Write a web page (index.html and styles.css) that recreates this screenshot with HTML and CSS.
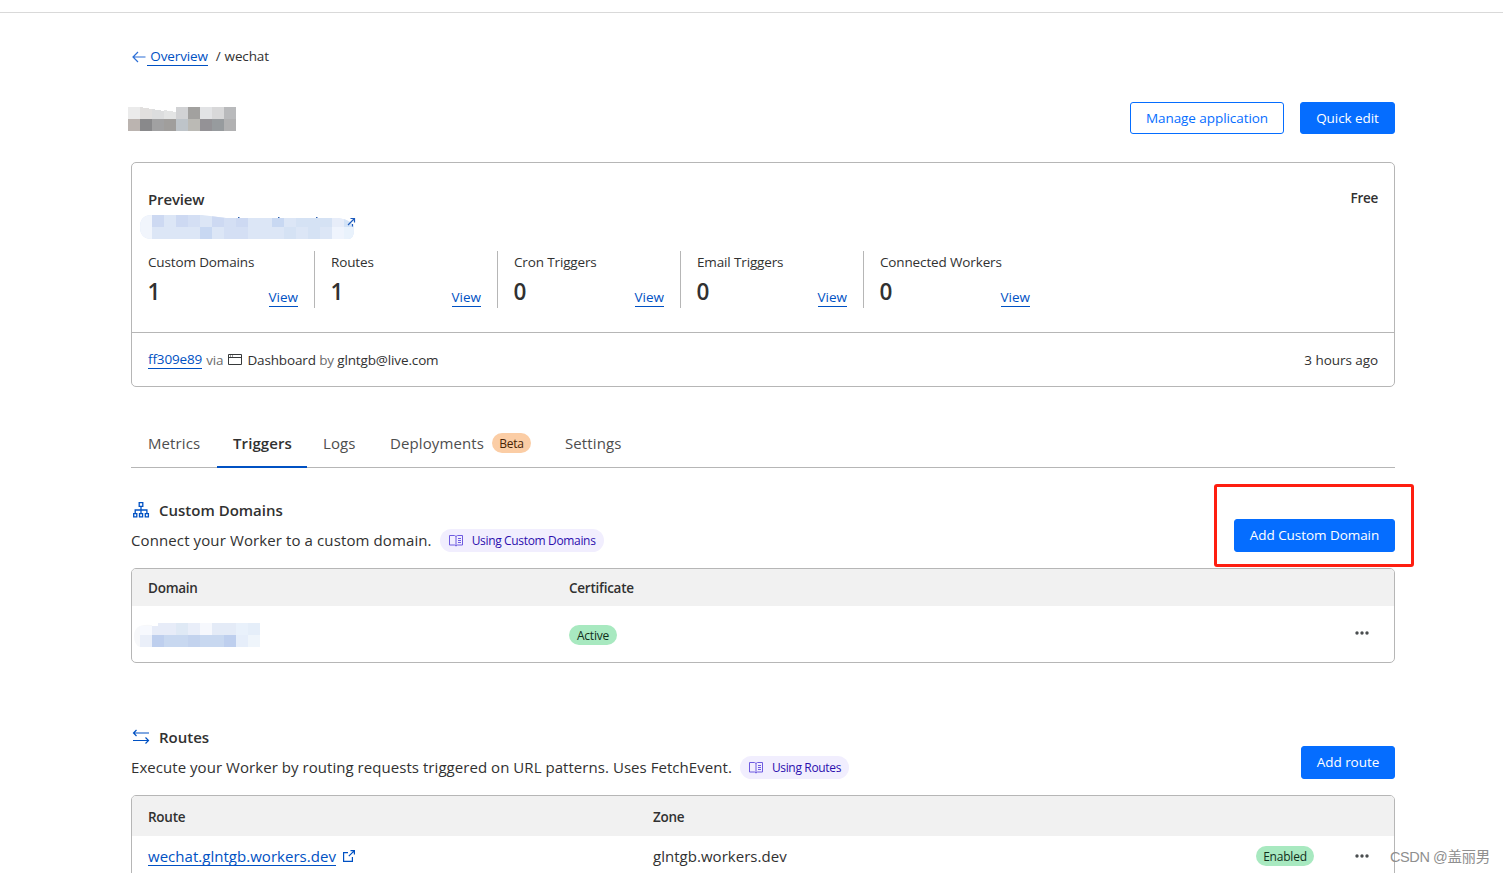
FILE: index.html
```html
<!DOCTYPE html>
<html lang="en">

<head>
  <meta charset="UTF-8" />
  <meta name="viewport" content="width=device-width, initial-scale=1.0" />
  <title>wechat - Workers</title>
  <link rel="stylesheet" href="styles.css">
</head>

<body>
  <div class="topbar"></div>
  <main class="page">
    <nav class="breadcrumb">
      <svg class="back" width="14" height="12" viewBox="0 0 14 12" fill="none" stroke="currentColor" stroke-width="1.2"><path d="M6 1L1 6l5 5M1 6h12.5" /></svg>
      <a href="#" class="back-link">&nbsp;Overview</a>
      <span class="slash">/</span>
      <span class="here">wechat</span>
    </nav>

    <header class="page-head">
      <svg class="mask-title" width="108" height="24" viewBox="0 0 108 24" shape-rendering="crispEdges">
        <path fill="#ebebeb" d="M0 0h12v12H0z" /><path fill="#e1dfde" d="M12 0l12 2v10H12z" />
        <path fill="#dcddde" d="M24 2l12 2v8H24z" /><path fill="#e3e4e4" d="M36 3l12 2v7H36z" />
        <path fill="#d1d2d4" d="M48 0h12v12H48z" /><path fill="#a2a19f" d="M60 0h12v12H60z" />
        <path fill="#e2e3e5" d="M72 0h12v12H72z" /><path fill="#d8d8d9" d="M84 0h12v12H84z" />
        <path fill="#b9babc" d="M96 0h12v12H96z" /><path fill="#bbb4b0" d="M0 12h12v12H0z" />
        <path fill="#89898b" d="M12 12h12v12H12z" /><path fill="#a1a1a2" d="M24 12h12v12H24z" />
        <path fill="#a09e9c" d="M36 12h12v12H36z" /><path fill="#bec4c9" d="M48 12h12v12H48z" />
        <path fill="#bbbab5" d="M60 12h12v12H60z" /><path fill="#949296" d="M72 12h12v12H72z" />
        <path fill="#979b9e" d="M84 12h12v12H84z" /><path fill="#b1b1b2" d="M96 12h12v12H96z" />
      </svg>
      <div class="actions">
        <button class="btn btn-outline w-manage"><span>Manage application</span></button>
        <button class="btn w-quick"><span>Quick edit</span></button>
      </div>
    </header>

    <section class="card">
      <div class="card-top">
        <div class="preview-row">
          <h3>Preview</h3>
          <span class="plan">Free</span>
        </div>
        <svg class="mask-url" width="216" height="26" viewBox="0 0 216 26">
          <clipPath id="url"><path d="M12 1h50l24 3h112q16 2 16 12 0 9-6 9H12Q0 25 0 13T12 1z" /></clipPath>
          <g clip-path="url(#url)" shape-rendering="crispEdges">
            <path fill="#dce6f6" d="M0 0h216v26H0z" />
            <path fill="#f1f5fc" d="M0 0h12v26H0z" />
            <path fill="#cdd9f2" d="M12 1h12v12H12zM36 1h12v12H36zM72 1h12v12H72zM96 1h12v12H96z" />
            <path fill="#c8d8f2" d="M60 13h12v12H60zM132 1h12v12h-12z" />
            <path fill="#d4dff4" d="M48 1h12v12H48zM84 13h24v12H84zM84 1h12v12H84z" />
            <path fill="#d5e2f4" d="M156 1h36v12h-36zM144 13h12v12h-12zM168 13h12v12h-12z" />
            <path fill="#e7edf9" d="M192 1h12v12h-12z" /><path fill="#d3e3f7" d="M204 1h12v12h-12z" />
            <path fill="#eff4fd" d="M192 13h12v12h-12z" /><path fill="#e9f2fc" d="M204 13h12v12h-12z" />
          </g>
          <path d="M208 11l6-6M210.500 4.500h4v4M212.500 10v2.500" fill="none" stroke="#1d5bbd" stroke-width="1.200" />
          <path d="M98 3.500h1.500M138 3.500h1.500M176 3.500h1.500" stroke="#2c5fae" stroke-width="1" />
        </svg>
        <div class="stats">
          <div class="stat"><div class="label">Custom Domains</div><div class="num"><b>1</b><a href="#">View</a></div></div>
          <div class="stat"><div class="label">Routes</div><div class="num"><b>1</b><a href="#">View</a></div></div>
          <div class="stat"><div class="label">Cron Triggers</div><div class="num"><b>0</b><a href="#">View</a></div></div>
          <div class="stat"><div class="label">Email Triggers</div><div class="num"><b>0</b><a href="#">View</a></div></div>
          <div class="stat"><div class="label">Connected Workers</div><div class="num"><b>0</b><a href="#">View</a></div></div>
        </div>
      </div>
      <div class="deploy">
        <a href="#" class="hash">ff309e89</a>
        <span class="muted via">via</span>
        <svg class="window" width="14" height="12" viewBox="0 0 14 12" fill="none" stroke="#36393a"><path d="M.5.5h13v10H.5zM.5 3.500h13" /><path d="M2 2h1M4 2h1" /></svg>
        <span class="dash">Dashboard <span class="muted">by</span> glntgb@live.com</span>
        <span class="ago">3 hours ago</span>
      </div>
    </section>

    <nav class="tabs">
      <a class="tab t-metrics">Metrics</a>
      <a class="tab t-triggers active">Triggers</a>
      <a class="tab t-logs">Logs</a>
      <a class="tab t-deploy">Deployments <span class="badge beta">Beta</span></a>
      <a class="tab t-settings">Settings</a>
    </nav>

    <section class="block domains">
      <div class="block-head">
        <div>
          <h2>
            <svg width="18" height="18" viewBox="0 0 18 18" fill="none" stroke="#0051c3" stroke-width="1.300"><path d="M7.200 1.700h3.600v3.600H7.200zM1.700 12.700h3.100v3.100H1.700zM7.500 12.700h3.100v3.100H7.500zM13.300 12.700h3.100v3.100h-3.100zM9 5.300v7.400M3.200 12.700V9h11.700v3.700" /></svg>
            Custom Domains
          </h2>
          <p><span class="desc-a">Connect your Worker to a custom domain.</span>
            <a class="doc"><svg width="14" height="13" viewBox="0 0 14 13" fill="none" stroke="#6e5be0"><path d="M.5 1.500H5.500L7 2.500l1.500-1h5v9.500h-5L7 12l-1.500-1h-5zM7 2.500V12M9 4.500h3M9 6.500h3M9 8.500h3" /></svg><span>Using Custom Domains</span></a>
          </p>
        </div>
        <div class="highlight"><button class="btn w-domain"><span>Add Custom Domain</span></button></div>
      </div>
      <div class="table">
        <div class="row head"><span>Domain</span><span>Certificate</span></div>
        <div class="row">
          <span>
            <svg class="mask-domain" width="126" height="24" viewBox="0 0 126 24">
              <path fill="#f7f8fa" d="M18 2Q0 0 0 13q0 9 6 11h12z" />
              <g shape-rendering="crispEdges">
                <path fill="#f7f9fe" d="M6 3h12v9H6z" /><path fill="#e7ecf8" d="M24 0h18v12H18V3h6z" />
                <path fill="#dfe9f5" d="M42 0h12v12H42z" /><path fill="#e9eef9" d="M54 0h12v12H54z" />
                <path fill="#f6f8fd" d="M66 0h12v12H66z" /><path fill="#e4ebf7" d="M78 0h24v12H78z" />
                <path fill="#e9f1fb" d="M102 0h12v12h-12z" /><path fill="#e5eef9" d="M114 0h12v12h-12z" />
                <path fill="#eaeff9" d="M6 12h12v12H6z" /><path fill="#becfee" d="M18 12h12v12H18zM90 12h12v12H90z" />
                <path fill="#c8d8f0" d="M30 12h60v12H30z" /><path fill="#c3d3ee" d="M54 12h12v12H54z" />
                <path fill="#e6eefa" d="M102 12h12v12h-12z" /><path fill="#eff5fb" d="M114 12h12v12h-12z" />
              </g>
            </svg>
          </span>
          <span><span class="badge green b-active">Active</span></span>
          <svg class="dots" width="14" height="4" viewBox="0 0 14 4" fill="#4a4d4f"><circle cx="2" cy="2" r="1.700" /><circle cx="7" cy="2" r="1.700" /><circle cx="12" cy="2" r="1.700" /></svg>
        </div>
      </div>
    </section>

    <section class="block routes">
      <div class="block-head">
        <div>
          <h2>
            <svg width="18" height="18" viewBox="0 0 18 18" fill="none" stroke="#0051c3" stroke-width="1.200"><path d="M17 5H1.500M4.500 2l-3 3 3 3M1 12.500h15.500M13.500 9.500l3 3-3 3" /></svg>
            Routes
          </h2>
          <p><span class="desc-b">Execute your Worker by routing requests triggered on URL patterns. Uses FetchEvent.</span>
            <a class="doc"><svg width="14" height="13" viewBox="0 0 14 13" fill="none" stroke="#6e5be0"><path d="M.5 1.500H5.500L7 2.500l1.500-1h5v9.500h-5L7 12l-1.500-1h-5zM7 2.500V12M9 4.500h3M9 6.500h3M9 8.500h3" /></svg><span>Using Routes</span></a>
          </p>
        </div>
        <button class="btn w-route"><span>Add route</span></button>
      </div>
      <div class="table">
        <div class="row head"><span>Route</span><span>Zone</span></div>
        <div class="row">
          <span class="route-cell"><a href="#">wechat.glntgb.workers.dev</a><svg width="12" height="12" viewBox="0 0 12 12" fill="none" stroke="#0051c3" stroke-width="1.200"><path d="M5 2.600H.6v8.800h8.800V7M7.500.6h3.900v3.900M11.400.6L5.800 6.200" /></svg></span>
          <span class="zone">glntgb.workers.dev</span>
          <span class="badge green b-enabled">Enabled</span>
          <svg class="dots" width="14" height="4" viewBox="0 0 14 4" fill="#4a4d4f"><circle cx="2" cy="2" r="1.700" /><circle cx="7" cy="2" r="1.700" /><circle cx="12" cy="2" r="1.700" /></svg>
        </div>
      </div>
    </section>
  </main>
  <div class="watermark">CSDN @盖丽男</div>
</body>

</html>
```
FILE: styles.css
```css
* {
  box-sizing: border-box;
}

body {
  margin: 0;
  height: 873px;
  overflow: hidden;
  position: relative;
  background: #fff;
  color: #313131;
  font-family: "Open Sans", "Noto Sans", sans-serif;
  font-size: 13.5px;
  line-height: 20px;
  letter-spacing: -0.14px;
  white-space: nowrap;
}

h2,
h3,
p {
  margin: 0;
}

a {
  color: #0051c3;
  text-decoration: none;
}

svg {
  flex: none;
}

.topbar {
  height: 13px;
  border-bottom: 1px solid #d9d9d9;
}

.page {
  width: 1264px;
  margin-left: 131px;
}

.breadcrumb {
  display: flex;
  align-items: center;
  height: 20px;
  margin-top: 33px;
}

.back {
  margin-left: 1px;
  margin-top: 2px;
  color: #2c6fd6;
}

.back-link {
  border-bottom: 1px solid #0051c3;
  height: 20px;
  margin-left: 1px;
}

.slash {
  margin: 0 4px 0 8px;
}

.page-head {
  display: flex;
  align-items: center;
  justify-content: space-between;
  height: 32px;
  margin-top: 36px;
}

.mask-title {
  margin-left: -3px;
  margin-top: 2px;
}

.actions {
  display: flex;
  gap: 16px;
}

.btn {
  height: 33px;
  padding: 0 0 1px;
  border: 1px solid #056dff;
  border-radius: 3px;
  background: #056dff;
  color: #fff;
  font-family: inherit;
  font-size: 13.5px;
  letter-spacing: -0.06px;
  line-height: 20px;
}

.page-head .btn {
  height: 32px;
  padding: 0;
}

.page-head .btn-outline {
  background: #fff;
  color: #056dff;
}

.w-manage { width: 154px; }
.w-quick { width: 95px; }
.w-domain { width: 161px; }
.w-route { width: 94px; }

.card {
  margin-top: 28px;
  height: 225px;
  border: 1px solid #b6b6b6;
  border-radius: 5px;
}

.card-top {
  height: 170px;
  padding: 26px 16px 0;
  border-bottom: 1px solid #b6b6b6;
}

.preview-row {
  display: flex;
  justify-content: space-between;
  height: 25px;
}

.preview-row h3 {
  font-size: 15px;
  font-weight: 600;
}

.plan {
  margin-top: -1px;
  font-weight: 600;
  letter-spacing: -0.3px;
}

.mask-url {
  display: block;
  margin-left: -8px;
}

.stats {
  display: flex;
  margin-top: 11px;
}

.stat {
  width: 183px;
  height: 57px;
  padding: 1px 16px 0;
  border-right: 1px solid #b6b6b6;
}

.stat:first-child {
  width: 167px;
  padding-left: 0;
}

.stat:last-child {
  border-right: 0;
  padding-right: 17px;
}

.num {
  display: flex;
  align-items: flex-end;
  justify-content: space-between;
  height: 35px;
}

.num b {
  font-size: 22.5px;
  font-weight: 600;
  line-height: 31px;
  margin-left: -0.5px;
}

.num a {
  height: 20px;
  border-bottom: 1px solid #0051c3;
  letter-spacing: 0;
}

.deploy {
  display: flex;
  align-items: center;
  height: 54px;
  padding: 0 16px;
}

.hash {
  height: 20px;
  margin-top: -2px;
  border-bottom: 1px solid #0051c3;
}

.muted {
  color: #6c6c6c;
}

.via {
  margin: 0 5px 0 4px;
}

.window {
  margin-right: 5px;
}

.ago {
  margin-left: auto;
  letter-spacing: -0.06px;
}

.tabs {
  display: flex;
  height: 48px;
  margin-top: 33px;
  border-bottom: 1px solid #b6b6b6;
  font-size: 15px;
  letter-spacing: 0.1px;
}

.tab {
  height: 48px;
  padding: 13px 16px 0;
  color: #4e4e4e;
}

.t-metrics { width: 86px; padding-left: 17px; }
.t-triggers { width: 90px; }
.t-logs { width: 67px; }
.t-deploy { width: 174px; padding-right: 0; display: flex; }
.t-settings { padding-left: 17px; }

.active {
  border-bottom: 2px solid #0051c3;
  color: #313131;
  font-weight: 600;
}

.badge {
  display: inline-block;
  height: 20px;
  border-radius: 10px;
  font-size: 12px;
  letter-spacing: -0.2px;
  line-height: 21px;
  text-align: center;
}

.beta {
  width: 39px;
  margin-left: auto;
  margin-right: 17px;
  background: #fbcda5;
  color: #482303;
}

.green {
  background: #a8e9c0;
  color: #102f1b;
}

.b-active { width: 48px; }
.b-enabled { width: 58px; }

.block-head {
  display: flex;
  justify-content: space-between;
  position: relative;
}

.domains {
  margin-top: 31px;
}

.domains .block-head {
  height: 69px;
}

.block h2 {
  display: flex;
  align-items: center;
  gap: 9px;
  height: 22px;
  margin-left: 1px;
  font-size: 15px;
  font-weight: 600;
  letter-spacing: 0;
}

.block p {
  display: flex;
  align-items: center;
  gap: 8px;
  height: 24px;
  margin-top: 7px;
  font-size: 15px;
}

.desc-a {
  letter-spacing: 0.11px;
}

.desc-b {
  letter-spacing: 0.05px;
}

.doc {
  display: flex;
  align-items: center;
  gap: 9px;
  height: 23px;
  padding: 1px 8px 0 9px;
  border-radius: 12px;
  background: #f1eefe;
  color: #2c0fae;
  font-size: 12px;
  letter-spacing: -0.34px;
}

/* red frame around the button */
.highlight {
  position: absolute;
  top: -15px;
  right: -19px;
  width: 200px;
  height: 83px;
  padding: 32px 0 0 17px;
  border: 3px solid #fe1e10;
  border-radius: 3px;
  line-height: 0;
}

.table {
  border: 1px solid #b6b6b6;
  border-radius: 5px;
  overflow: hidden;
}

.row {
  display: grid;
  align-items: center;
  padding: 0 16px;
}

.domains .row {
  grid-template-columns: 421px 1fr 24px;
  height: 56px;
}

.row.head {
  background: #f1f1f1;
  font-weight: 600;
  letter-spacing: -0.25px;
}

.domains .row.head {
  height: 37px;
}

.domains .table {
  height: 95px;
}

.mask-domain {
  display: block;
  margin: 2px 0 0 -14px;
}

.dots {
  margin-left: 1px;
}

.domains .dots {
  margin-top: -2px;
}

.domains .b-active {
  display: block;
  margin-top: 2px;
}

.routes {
  margin-top: 63px;
}

.routes .block-head {
  height: 69px;
}

.w-route {
  margin-top: 20px;
}

.routes .row {
  grid-template-columns: 505px 603px 98px 24px;
  height: 40px;
}

.routes .row.head {
  padding-top: 2px;
}

.routes .table {
  height: 100px;
}

.route-cell {
  display: flex;
  align-items: center;
  gap: 7px;
}

.route-cell,
.zone {
  font-size: 15px;
  letter-spacing: 0.03px;
}

.route-cell a {
  height: 20px;
  border-bottom: 1px solid #0051c3;
}

.watermark {
  position: absolute;
  top: 847px;
  left: 1390px;
  color: #8f8f8f;
  font-family: "Liberation Sans", "Noto Sans CJK SC", sans-serif;
  font-size: 14.5px;
  letter-spacing: -0.4px;
}
```
